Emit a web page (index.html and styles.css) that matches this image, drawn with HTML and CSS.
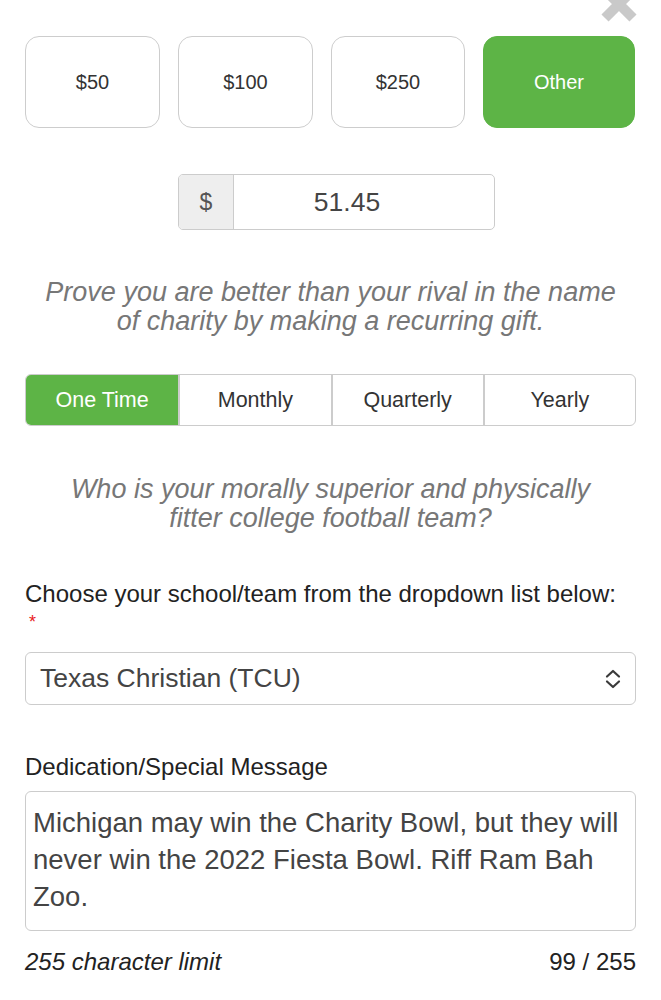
FILE: index.html
```html
<!DOCTYPE html>
<html>
<head>
<meta charset="utf-8">
<link rel="stylesheet" href="styles.css">
</head>
<body>
<div class="page">
  <button class="close" aria-label="Close">
    <svg width="44" height="44" viewBox="0 0 44 44"><path d="M8 8 L36 36 M36 8 L8 36" stroke="#c9c9c9" stroke-width="10" stroke-linecap="butt"/></svg>
  </button>
  <div class="amounts">
    <div class="amount">$50</div>
    <div class="amount">$100</div>
    <div class="amount">$250</div>
    <div class="amount active">Other</div>
  </div>
  <div class="input-row">
    <div class="input-group">
      <span class="addon">$</span>
      <span class="value">51.45</span>
    </div>
  </div>
  <p class="prompt">Prove you are better than your rival in the name<br>of charity by making a recurring gift.</p>
  <div class="segments">
    <div class="seg active">One Time</div>
    <div class="seg">Monthly</div>
    <div class="seg">Quarterly</div>
    <div class="seg">Yearly</div>
  </div>
  <p class="prompt prompt2">Who is your morally superior and physically<br>fitter college football team?</p>
  <label class="label">Choose your school/team from the dropdown list below:<span class="req">*</span></label>
  <div class="select">
    <span>Texas Christian (TCU)</span>
    <svg class="chev" width="20" height="24" viewBox="0 0 20 24"><path d="M4 9.5 L10 4 L16 9.5 M4 14.5 L10 20 L16 14.5" fill="none" stroke="#3a3a3a" stroke-width="2.2" stroke-linecap="round" stroke-linejoin="round"/></svg>
  </div>
  <label class="label label2">Dedication/Special Message</label>
  <div class="textarea">Michigan may win the Charity Bowl, but they will never win the 2022 Fiesta Bowl. Riff Ram Bah Zoo.</div>
  <div class="foot">
    <span class="limit">255 character limit</span>
    <span class="count">99 / 255</span>
  </div>
</div>
</body>
</html>
```

FILE: styles.css
```css
* { box-sizing: border-box; }
html, body { margin: 0; padding: 0; background: #fff; }
body { font-family: "Liberation Sans", Arial, sans-serif; color: #333; }
.page { position: relative; width: 661px; padding: 36px 25px 0 25px; }
.close { position: absolute; top: -18px; right: 20px; padding: 0; margin: 0; border: 0; background: none; line-height: 0; }
.amounts { display: grid; grid-template-columns: 135px 135px 134px 152px; gap: 18px; }
.amount { height: 92px; border: 1.5px solid #cdcdcd; border-radius: 14px; display: flex; align-items: center; justify-content: center; font-size: 20px; color: #333; }
.amount.active { background: #5db446; border-color: #5db446; color: #fff; }
.input-row { display: flex; justify-content: flex-start; padding-left: 153px; margin-top: 46px; }
.input-group { display: flex; width: 317px; height: 56px; border: 1.5px solid #cccccc; border-radius: 5px; overflow: hidden; }
.addon { width: 55px; background: #eeeeee; border-right: 1.5px solid #cccccc; display: flex; align-items: center; justify-content: center; font-size: 23px; color: #555; }
.value { flex: 1; display: flex; align-items: center; justify-content: center; font-size: 26.5px; color: #444; padding-right: 34px; }
.prompt { margin: 48px 0 0; text-align: center; font-style: italic; font-size: 27px; line-height: 29px; color: #777; }
.segments { margin-top: 38px; display: grid; grid-template-columns: repeat(4, 1fr); height: 52px; border: 1.5px solid #cccccc; border-radius: 6px; overflow: hidden; }
.seg { display: flex; align-items: center; justify-content: center; font-size: 21.5px; color: #333; border-left: 2px solid #cccccc; }
.seg:first-child { border-left: 0; }
.seg.active { background: #5db446; color: #fff; }
.prompt2 { margin-top: 49px; }
.label { display: block; margin-top: 46px; font-size: 24px; line-height: 29px; color: #222; }
.req { display: block; color: #e8201c; font-size: 18px; padding-left: 4px; }
.select { margin-top: 15px; height: 53px; border: 1.5px solid #cccccc; border-radius: 6px; display: flex; align-items: center; justify-content: space-between; padding: 0 12px 0 14px; font-size: 26.5px; color: #444; }
.label2 { margin-top: 47px; }
.textarea { margin-top: 10px; height: 140px; border: 1.5px solid #cccccc; border-radius: 6px; padding: 12px 6px 0 7px; font-size: 27.5px; line-height: 37px; color: #444; }
.foot { margin-top: 16px; display: flex; justify-content: space-between; font-size: 24px; line-height: 29px; color: #222; }
.limit { font-style: italic; }
```
